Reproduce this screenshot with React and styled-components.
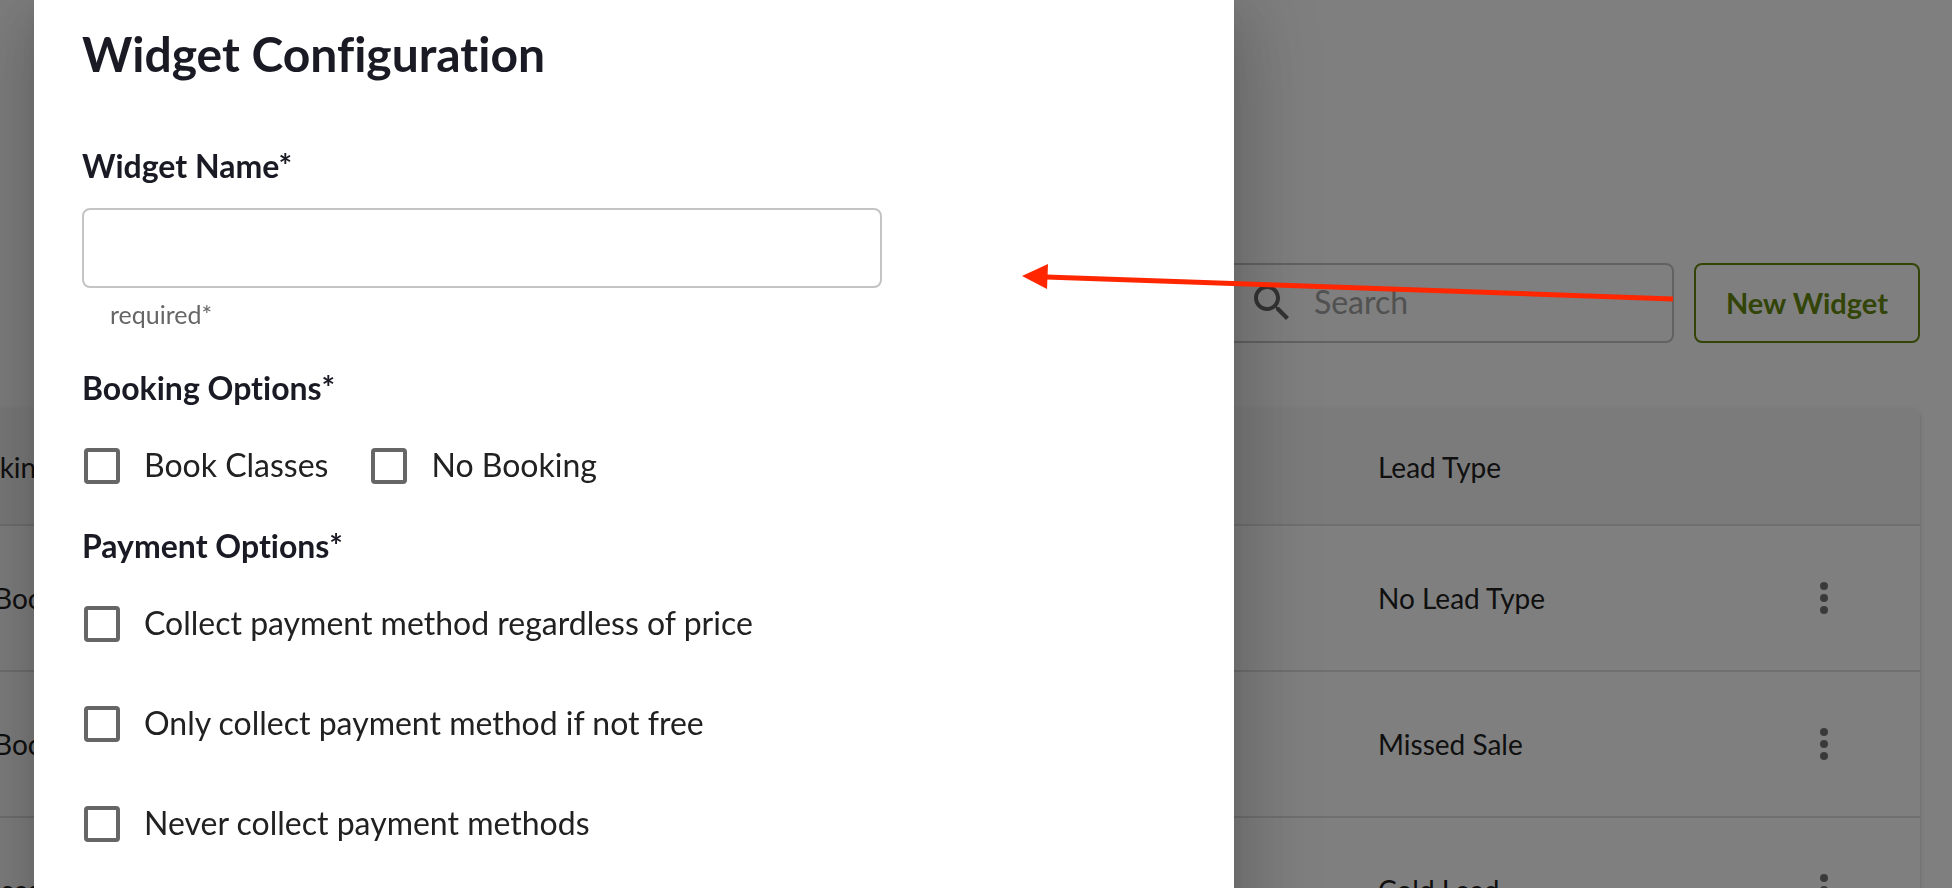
import React from "react";
import styled, { createGlobalStyle, css } from "styled-components";

const GlobalStyle = createGlobalStyle`
  *, *::before, *::after { box-sizing: border-box; }
  html, body { height: 100%; overflow: hidden; }
  body {
    margin: 0;
    background: #fff;
    color: #212121;
    font-family: Lato, "Open Sans", sans-serif;
    font-size: 28px;
    font-variant-ligatures: none;
  }
`;

const Page = styled.main`
  padding: 263px 32px 0 0;
`;

const Toolbar = styled.div`
  display: flex;
  justify-content: flex-end;
  gap: 20px;
  margin-bottom: 65px;
`;

const SearchField = styled.label`
  display: flex;
  align-items: center;
  gap: 18px;
  width: 460px;
  height: 80px;
  padding: 0 32px;
  border: 2px solid #c4c4c4;
  border-radius: 8px;
  color: #666;

  svg { flex: none; width: 48px; height: 48px; fill: currentColor; }
`;

const SearchInput = styled.input`
  flex: 1;
  min-width: 0;
  padding: 0 0 4px;
  border: 0;
  outline: 0;
  background: none;
  font: inherit;
  font-size: 32px;

  &::placeholder { color: #a2a2a2; opacity: 1; }
`;

const OutlineButton = styled.button`
  height: 80px;
  padding: 0 30px 2px;
  border: 2px solid #66880f;
  border-radius: 8px;
  background: none;
  color: #66880f;
  font: inherit;
  font-size: 29px;
  font-weight: 700;
`;

const Table = styled.table`
  width: calc(100% + 102px);
  margin-left: -102px;
  border-collapse: separate;
  border-spacing: 0;
  table-layout: fixed;
  border-radius: 8px;
  box-shadow:
    0 4px 2px -2px rgba(0, 0, 0, 0.2),
    0 2px 2px rgba(0, 0, 0, 0.14),
    0 2px 6px rgba(0, 0, 0, 0.12);
`;

const cell = css`
  padding: 0 52px;
  border-bottom: 2px solid #e0e0e0;
  font-weight: 400;
  line-height: 40px;
  text-align: left;
  white-space: nowrap;
`;

const HeadCell = styled.th`
  ${cell}
  height: 118px;
  padding-top: 2px;
  background: #f7f7f7;

  &:last-child { border-top-right-radius: 8px; }
`;

const Cell = styled.td`
  ${cell}
  height: 146px;
`;

const ActionCell = styled(Cell)`
  padding: 0 72px;
  text-align: right;
`;

const MenuButton = styled.button`
  width: 48px;
  height: 48px;
  padding: 0;
  border: 0;
  background: none;
  color: #757575;
  vertical-align: middle;

  svg { display: block; width: 48px; height: 48px; fill: currentColor; }
`;

const Backdrop = styled.div`
  position: fixed;
  inset: 0;
  overflow: hidden;
  padding-left: 34px;
  background: rgba(0, 0, 0, 0.5);
`;

const Dialog = styled.section`
  width: 1200px;
  max-width: 100%;
  height: calc(100% + 120px);
  margin-top: -24px;
  padding: 48px 48px 0;
  background: #fff;
  box-shadow:
    0 22px 30px -14px rgba(0, 0, 0, 0.2),
    0 48px 76px 6px rgba(0, 0, 0, 0.14),
    0 18px 92px 16px rgba(0, 0, 0, 0.12);
`;

const Title = styled.h1`
  margin: 0 0 62px;
  color: #1a1a24;
  font-size: 48px;
  font-weight: 700;
  line-height: 60px;
`;

const heading = css`
  display: block;
  margin: 0;
  padding: 0;
  color: #1a1a24;
  font-size: 32px;
  font-weight: 700;
  line-height: 40px;
`;

const FieldLabel = styled.label`
  ${heading}
`;

const TextInput = styled.input`
  display: block;
  width: 800px;
  max-width: 100%;
  height: 80px;
  margin-top: 22px;
  padding: 0 28px;
  border: 2px solid #c4c4c4;
  border-radius: 8px;
  outline: 0;
  background: #fff;
  font: inherit;
`;

const HelperText = styled.p`
  margin: 10px 28px 0;
  color: #666;
  font-size: 25px;
  line-height: 32px;
`;

const Group = styled.fieldset`
  min-width: 0;
  margin: ${(p) => p.$gap}px 0 0;
  padding: 0;
  border: 0;
`;

const Legend = styled.legend`
  ${heading}
`;

const Options = styled.div`
  display: flex;
  flex-direction: ${(p) => (p.$stacked ? "column" : "row")};
  gap: ${(p) => (p.$stacked ? 16 : 41)}px;
  margin-top: 16px;
`;

const Option = styled.label`
  display: flex;
  align-items: center;
  gap: 24px;
  height: 84px;
  padding-left: 2px;
  font-size: 32px;
`;

const OptionText = styled.span`
  padding-bottom: 4px;
`;

const Checkbox = styled.input`
  appearance: none;
  flex: none;
  width: 36px;
  height: 36px;
  margin: 0;
  border: 4px solid #666;
  border-radius: 4px;

  &:checked { background: #666; }
`;

const Arrow = styled.svg`
  position: absolute;
  top: 264px;
  left: 1022px;
  width: 651px;
  height: 40px;
  pointer-events: none;
`;

const rows = [
  { booking: "No Booking", lead: "No Lead Type" },
  { booking: "No Booking", lead: "Missed Sale" },
  { booking: "Classes", lead: "Cold Lead" },
];

function CheckOption({ children }) {
  return (
    <Option>
      <Checkbox type="checkbox" />
      <OptionText>{children}</OptionText>
    </Option>
  );
}

export default function App() {
  return (
    <>
      <GlobalStyle />
      <Page>
        <Toolbar>
          <SearchField>
            <svg viewBox="0 0 24 24" aria-hidden="true">
              <path d="M15.5 14h-.79l-.28-.27C15.41 12.59 16 11.11 16 9.5 16 5.91 13.09 3 9.5 3S3 5.91 3 9.5 5.91 16 9.5 16c1.61 0 3.09-.59 4.23-1.57l.27.28v.79l5 4.99L20.49 19l-4.99-5zm-6 0C7.01 14 5 11.99 5 9.5S7.01 5 9.5 5 14 7.01 14 9.5 11.99 14 9.5 14z" />
            </svg>
            <SearchInput placeholder="Search" aria-label="Search" />
          </SearchField>
          <OutlineButton type="button">New Widget</OutlineButton>
        </Toolbar>
        <Table>
          <colgroup>
            <col />
            <col style={{ width: 394 }} />
            <col style={{ width: 200 }} />
          </colgroup>
          <thead>
            <tr>
              <HeadCell>Booking</HeadCell>
              <HeadCell>Lead Type</HeadCell>
              <HeadCell aria-label="Actions" />
            </tr>
          </thead>
          <tbody>
            {rows.map((row) => (
              <tr key={row.lead}>
                <Cell>{row.booking}</Cell>
                <Cell>{row.lead}</Cell>
                <ActionCell>
                  <MenuButton type="button" aria-label={`Actions for ${row.lead}`}>
                    <svg viewBox="0 0 24 24" aria-hidden="true">
                      <circle cx="12" cy="6" r="2" />
                      <circle cx="12" cy="12" r="2" />
                      <circle cx="12" cy="18" r="2" />
                    </svg>
                  </MenuButton>
                </ActionCell>
              </tr>
            ))}
          </tbody>
        </Table>
      </Page>

      <Backdrop>
        <Dialog role="dialog" aria-modal="true" aria-labelledby="dialog-title">
          <Title id="dialog-title">Widget Configuration</Title>
          <FieldLabel htmlFor="widget-name">Widget Name*</FieldLabel>
          <TextInput id="widget-name" aria-describedby="widget-name-help" />
          <HelperText id="widget-name-help">required*</HelperText>
          <Group $gap={38}>
            <Legend>Booking Options*</Legend>
            <Options>
              <CheckOption>Book Classes</CheckOption>
              <CheckOption>No Booking</CheckOption>
            </Options>
          </Group>
          <Group $gap={18}>
            <Legend>Payment Options*</Legend>
            <Options $stacked>
              <CheckOption>Collect payment method regardless of price</CheckOption>
              <CheckOption>Only collect payment method if not free</CheckOption>
              <CheckOption>Never collect payment methods</CheckOption>
            </Options>
          </Group>
        </Dialog>
      </Backdrop>

      <Arrow viewBox="0 0 651 40" aria-hidden="true">
        <path d="M24 13L651 35" stroke="#ff2600" strokeWidth="5" fill="none" />
        <path d="M0 12L26 0L25 25Z" fill="#ff2600" />
      </Arrow>
    </>
  );
}
